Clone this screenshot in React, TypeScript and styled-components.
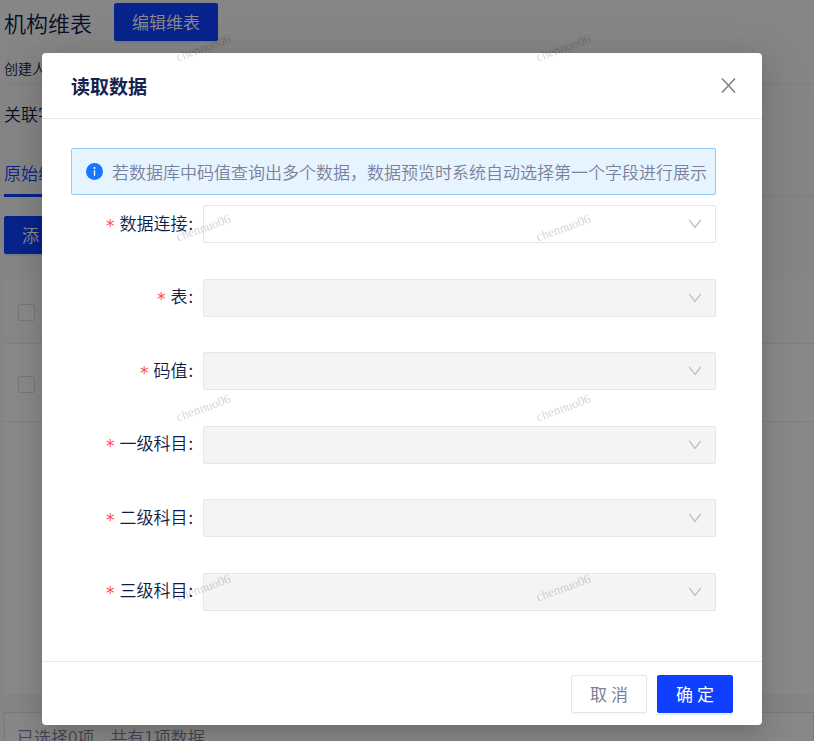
import React, { useState } from "react";
import styled, { createGlobalStyle, css } from "styled-components";

const GlobalStyle = createGlobalStyle`
  *, *::before, *::after { box-sizing: border-box; }
  body {
    margin: 0;
    background: #f5f5f5;
    color: #0d1c4a;
    font: 350 17px/24px "Noto Sans CJK SC", sans-serif;
  }
  button, select, input { font: inherit; margin: 0; }
`;

const Screen = styled.div`
  position: relative;
  height: 100vh;
  overflow: hidden;
`;

const Page = styled.main`
  display: flex;
  flex-direction: column;
  min-height: 100vh;
  padding-left: 4px;
`;

const PageHeader = styled.header`
  display: flex;
  align-items: center;
  gap: 22px;
  padding-top: 3px;
`;

const PageTitle = styled.h1`
  margin: 0;
  font-size: 22px;
  font-weight: 350;
  line-height: 36px;
`;

const Button = styled.button<{ $kind?: "primary" | "plain"; $compact?: boolean }>`
  height: 38px;
  padding: 0 17px;
  border: 1px solid #e3e5ef;
  border-radius: 2px;
  background: #fff;
  color: #7a809a;
  white-space: nowrap;
  cursor: pointer;
  box-shadow: 0 2px 0 rgba(0, 0, 0, 0.02);
  ${(p) =>
    p.$kind === "primary" &&
    css`
      border-color: #0f40ff;
      background: #0f40ff;
      color: #fff;
      box-shadow: 0 2px 0 rgba(5, 95, 255, 0.1);
    `}
  ${(p) =>
    p.$compact &&
    css`
      min-width: 76px;
      padding: 0;
      font-weight: 400;
    `}
`;

const Meta = styled.p`
  margin: 0;
  padding: 17px 0 4px;
  border-bottom: 1px solid #e3e5ea;
  font-size: 14px;
  line-height: 21px;
`;

const Related = styled.p`
  margin: 0;
  padding-top: 18px;
`;

const Tabs = styled.nav`
  display: flex;
  margin-top: 34px;
  border-bottom: 1px solid #e3e5ea;
`;

const Tab = styled.button`
  height: 37px;
  margin-bottom: -1px;
  padding: 0 0 8px;
  border: 0;
  border-bottom: 3px solid #0f40ff;
  background: none;
  color: #0f40ff;
`;

const Toolbar = styled.div`
  padding: 19px 0 24px;
`;

const Table = styled.table`
  width: 100%;
  border-collapse: separate;
  border-spacing: 0;
  background: #fcfcfc;

  th, td {
    height: 78px;
    padding: 3px 14px 0;
    border-bottom: 1px solid #e6e8ee;
    text-align: left;
  }
  th { height: 66px; background: #f8f8f9; }
`;

const TableArea = styled.div`
  height: 416px;
  background: #fcfcfc;
`;

const Check = styled.input`
  display: block;
  appearance: none;
  width: 17px;
  height: 17px;
  border: 1px solid #d9dbe5;
  border-radius: 2px;
  background: #fcfcfc;
`;

const Pager = styled.footer`
  flex: 1;
  display: flex;
  gap: 16px;
  margin-top: 18px;
  padding: 12px 12px 0;
  border: 1px solid #dcdfe8;
  background: #fafafa;
  color: #7a809a;
`;

const Mask = styled.div`
  position: absolute;
  inset: 0;
  padding: 53px 52px 16px 42px;
  background: rgba(0, 0, 0, 0.45);
`;

const Dialog = styled.section`
  max-width: 720px;
  margin: 0 auto;
  border-radius: 4px;
  background: #fff;
  box-shadow: 0 6px 16px -8px rgba(0, 0, 0, 0.16), 0 9px 28px rgba(0, 0, 0, 0.1),
    0 12px 48px 16px rgba(0, 0, 0, 0.06);
`;

const DialogHeader = styled.header`
  display: flex;
  align-items: center;
  justify-content: space-between;
  height: 66px;
  padding: 0 23px 0 29px;
  border-bottom: 1px solid #e6e8f0;
`;

const DialogTitle = styled.h2`
  margin: 0;
  color: #14224f;
  font-size: 19px;
  font-weight: 700;
`;

const CloseButton = styled.button`
  display: flex;
  padding: 2px;
  border: 0;
  background: none;
  color: #7d7d7d;
  cursor: pointer;
`;

const DialogBody = styled.div`
  padding: 29px 46px 50px 29px;
`;

const Notice = styled.div`
  display: flex;
  align-items: center;
  gap: 9px;
  min-height: 47px;
  padding: 0 8px 0 14px;
  border: 1px solid #8fcbff;
  border-radius: 2px;
  background: #e6f4ff;
  color: #7a809a;

  svg { flex: none; }
`;

const Form = styled.form`
  display: flex;
  flex-direction: column;
  justify-content: space-between;
  min-height: 406px;
  margin-top: 10px;
`;

const Field = styled.div`
  display: grid;
  grid-template-columns: 122px 1fr;
  align-items: center;
  column-gap: 10px;
`;

const Label = styled.label`
  display: flex;
  justify-content: flex-end;
  gap: 5px;
  white-space: nowrap;
  padding-top: 3px;
`;

const Required = styled.span`
  color: #ff4d4f;
  font: 17px/30px "DejaVu Sans", sans-serif;
`;

const Colon = styled.span`
  margin-left: -4px;
`;

const SelectBox = styled.div`
  display: grid;

  > * { grid-area: 1 / 1; }
  svg {
    align-self: center;
    justify-self: end;
    margin-right: 14px;
    pointer-events: none;
  }
`;

const Select = styled.select`
  appearance: none;
  width: 100%;
  height: 38px;
  padding: 0 40px 0 12px;
  border: 1px solid #e3e5ef;
  border-radius: 2px;
  background: #fff;
  color: inherit;

  &:disabled { background: #f4f4f4; opacity: 1; }
`;

const DialogFooter = styled.footer`
  display: flex;
  justify-content: flex-end;
  gap: 10px;
  padding: 13px 29px 12px;
  border-top: 1px solid #e6e8f0;
`;

const WatermarkLayer = styled.div`
  position: absolute;
  inset: 0;
  display: grid;
  grid-template-columns: repeat(auto-fill, 360px);
  grid-auto-rows: 180px;
  padding: 39px 0 0 175px;
  margin-right: -360px;
  overflow: hidden;
  pointer-events: none;
`;

const Mark = styled.span`
  justify-self: start;
  align-self: start;
  color: rgba(0, 0, 0, 0.2);
  font: 400 13px/18px "Liberation Serif", serif;
  transform: rotate(-20deg);
`;

const CloseIcon = () => (
  <svg width="17" height="17" viewBox="0 0 17 17" fill="none" stroke="currentColor" strokeWidth="1.5" aria-hidden="true">
    <path d="M2 1.5 15 15.5M15 1.5 2 15.5" />
  </svg>
);

const InfoIcon = () => (
  <svg width="17" height="17" viewBox="0 0 17 17" aria-hidden="true">
    <circle cx="8.5" cy="8.5" r="8.5" fill="#1677ff" />
    <circle cx="8.5" cy="4.9" r="1" fill="#fff" />
    <path d="M8.5 7.2v5.6" stroke="#fff" strokeWidth="1.3" />
  </svg>
);

const Chevron = () => (
  <svg width="14" height="12" viewBox="0 0 14 12" fill="none" stroke="#bdbdbd" strokeWidth="1.3" aria-hidden="true">
    <path d="M1.2 1.8 7 9.4 12.8 1.8" />
  </svg>
);

const fields = [
  { id: "connection", label: "数据连接", enabled: true },
  { id: "table", label: "表" },
  { id: "code", label: "码值" },
  { id: "level1", label: "一级科目" },
  { id: "level2", label: "二级科目" },
  { id: "level3", label: "三级科目" },
];

const marks = Array.from({ length: 8 }, (_, i) => i);

export default function App() {
  const [open, setOpen] = useState(true);
  const close = () => setOpen(false);

  return (
    <>
      <GlobalStyle />
      <Screen>
        <Page>
          <PageHeader>
            <PageTitle>机构维表</PageTitle>
            <Button $kind="primary">编辑维表</Button>
          </PageHeader>
          <Meta>创建人</Meta>
          <Related>关联字</Related>
          <Tabs>
            <Tab>原始维</Tab>
          </Tabs>
          <Toolbar>
            <Button $kind="primary" onClick={() => setOpen(true)}>添 加</Button>
          </Toolbar>
          <TableArea>
            <Table>
              <thead>
                <tr><th><Check type="checkbox" aria-label="全选" /></th></tr>
              </thead>
              <tbody>
                <tr><td><Check type="checkbox" aria-label="选择" /></td></tr>
              </tbody>
            </Table>
          </TableArea>
          <Pager>
            <span>已选择0项</span>
            <span>共有1项数据</span>
          </Pager>
        </Page>
        {open && (
          <Mask>
            <Dialog role="dialog" aria-modal="true" aria-labelledby="dialog-title">
              <DialogHeader>
                <DialogTitle id="dialog-title">读取数据</DialogTitle>
                <CloseButton aria-label="关闭" onClick={close}><CloseIcon /></CloseButton>
              </DialogHeader>
              <DialogBody>
                <Notice role="note">
                  <InfoIcon />
                  <span>若数据库中码值查询出多个数据，数据预览时系统自动选择第一个字段进行展示</span>
                </Notice>
                <Form>
                  {fields.map((f) => (
                    <Field key={f.id}>
                      <Label htmlFor={f.id}>
                        <Required>*</Required>
                        {f.label}
                        <Colon>:</Colon>
                      </Label>
                      <SelectBox>
                        <Select id={f.id} disabled={!f.enabled} />
                        <Chevron />
                      </SelectBox>
                    </Field>
                  ))}
                </Form>
              </DialogBody>
              <DialogFooter>
                <Button $compact onClick={close}>取 消</Button>
                <Button $compact $kind="primary" onClick={close}>确 定</Button>
              </DialogFooter>
            </Dialog>
          </Mask>
        )}
        <WatermarkLayer aria-hidden="true">
          {marks.map((m) => <Mark key={m}>chennuo06</Mark>)}
        </WatermarkLayer>
      </Screen>
    </>
  );
}
